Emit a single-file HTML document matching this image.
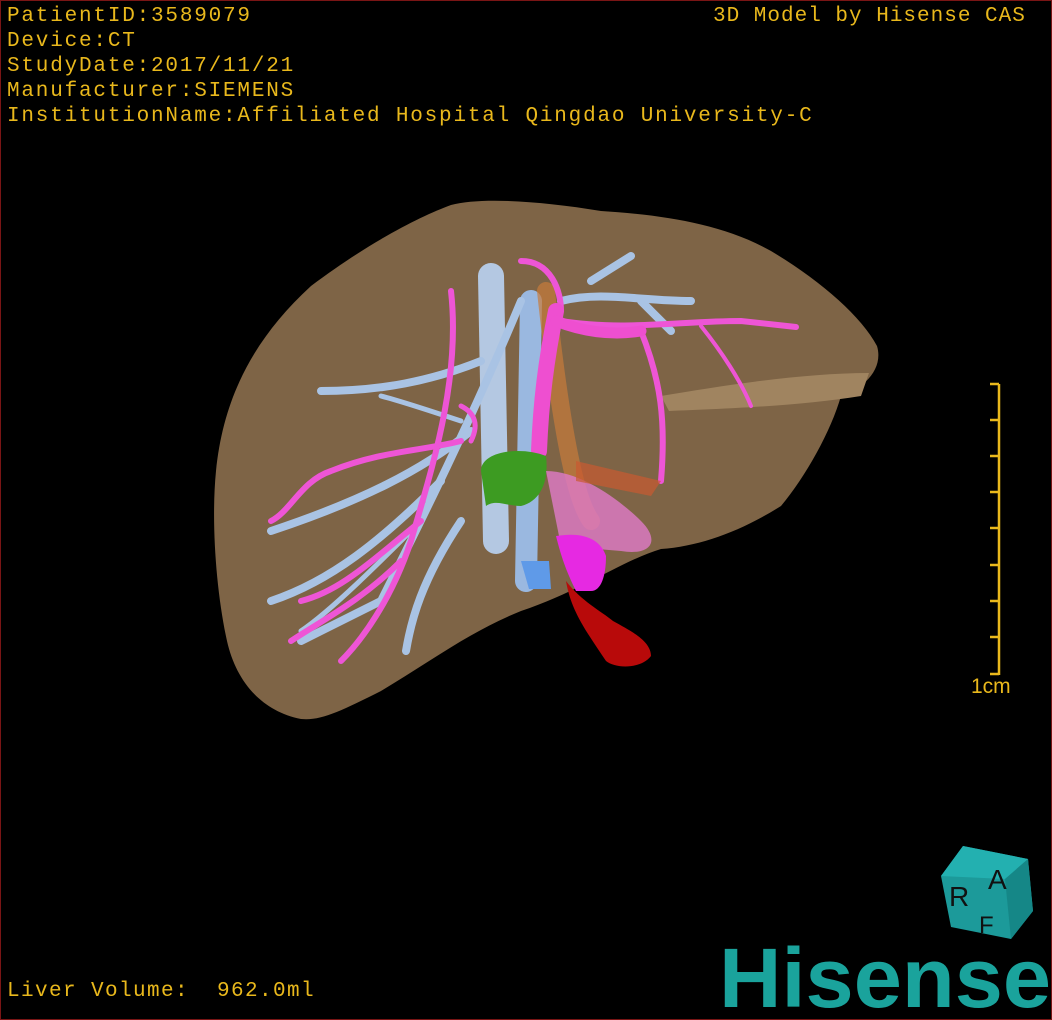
<!DOCTYPE html>
<html><head><meta charset="utf-8"><style>
html,body{margin:0;padding:0;background:#000;}
.wrap{position:relative;width:1050px;height:1018px;border:1px solid #7a1515;overflow:hidden;background:#000;}
.t{position:absolute;font-family:"Liberation Mono",monospace;color:#e9b81c;font-size:21px;letter-spacing:1.8px;white-space:pre;line-height:25px;}
</style></head><body><div class="wrap">
<svg width="1050" height="1018" style="position:absolute;left:0;top:0">
<path d="M215,470 C222,400 250,340 310,285 C370,240 420,215 450,204 C480,196 540,200 600,210 C660,214 720,222 770,250 C820,280 860,315 876,345 C882,365 868,385 840,395 C830,430 805,475 780,505 C740,530 700,545 660,548 C620,560 580,590 520,610 C470,630 430,660 380,690 C340,710 320,720 300,718 C260,710 235,680 226,640 C215,590 210,520 215,470 Z" fill="#7e6446"/>
<path d="M660,395 C720,385 800,372 868,372 L860,395 C800,405 720,408 668,410 Z" fill="#a08460"/>
<g fill="none" stroke-linecap="round">
<path d="M490,275 L495,540" stroke="#b4c8e2" stroke-width="26"/>
<path d="M530,300 L525,580" stroke="#9ab8e0" stroke-width="22"/>
<path d="M545,290 C560,430 575,500 590,520" stroke="#c77a3a" stroke-width="18" opacity=".7"/>
<g stroke="#a9c3e4" stroke-width="8">
<path d="M520,300 C470,420 420,520 380,600 L300,640"/>
<path d="M470,430 C420,470 360,500 270,530"/>
<path d="M480,360 C430,380 380,390 320,390"/>
<path d="M460,520 C420,580 410,620 405,650"/>
<path d="M440,480 C380,540 330,580 270,600"/>
<path d="M560,300 C600,290 640,300 690,300"/>
<path d="M590,280 L630,255"/>
<path d="M640,300 L670,330"/>
<path d="M460,420 C430,410 400,400 380,395" stroke-width="5"/>
<path d="M420,520 C380,560 330,610 300,630" stroke-width="5"/>
</g>
<g stroke="#ee55d6" stroke-width="6">
<path d="M450,290 C460,380 430,470 410,540 C390,600 360,640 340,660"/>
<path d="M460,440 C420,450 380,450 330,470 C300,480 290,510 270,520"/>
<path d="M420,520 C370,560 340,590 300,600"/>
<path d="M560,320 C620,330 680,320 740,320 L795,326"/>
<path d="M640,330 C660,380 665,420 660,480"/>
<path d="M520,260 C550,260 560,290 560,310"/>
<path d="M400,560 C360,600 320,620 290,640"/>
<path d="M700,325 C720,350 740,380 750,405" stroke-width="4"/>
<path d="M470,440 C480,420 470,410 460,405" stroke-width="5"/>
</g>
<path d="M555,310 C545,360 540,400 538,450" stroke="#ee4fd0" stroke-width="16"/>
<path d="M555,320 C580,330 610,335 640,330" stroke="#ee4fd0" stroke-width="11"/>
</g>
<path d="M480,470 C480,450 520,445 545,455 C548,480 540,500 520,505 C505,505 495,498 485,505 Z" fill="#3d9b22"/>
<path d="M545,470 C580,470 620,500 640,520 C660,540 650,555 620,550 L560,545 Z" fill="#e07ac8" opacity=".8"/>
<path d="M555,535 C585,530 600,540 605,555 C605,575 600,590 590,590 L575,590 C565,570 560,555 555,535 Z" fill="#e629e2"/>
<path d="M565,580 C580,600 600,610 612,620 C630,630 650,640 650,655 C640,668 615,668 605,660 C585,630 570,610 565,580 Z" fill="#b80a0a"/>
<path d="M520,560 L548,560 L550,588 L528,588 Z" fill="#5f9ae8"/>
<path d="M575,460 L660,480 L650,495 L575,480 Z" fill="#c95a30" opacity=".7"/>
<g stroke="#e9b81c" stroke-width="2.5">
<line x1="998" y1="383" x2="998" y2="674"/>
<line x1="989" y1="383" x2="998" y2="383"/><line x1="989" y1="419" x2="998" y2="419"/>
<line x1="989" y1="455" x2="998" y2="455"/><line x1="989" y1="491" x2="998" y2="491"/>
<line x1="989" y1="527" x2="998" y2="527"/><line x1="989" y1="564" x2="998" y2="564"/>
<line x1="989" y1="600" x2="998" y2="600"/><line x1="989" y1="636" x2="998" y2="636"/>
<line x1="989" y1="673" x2="998" y2="673"/>
</g>
<polygon points="962,845 1027,858 1032,910 1010,938 950,926 940,875" fill="#1c9a9a"/>
<polygon points="962,845 1027,858 1004,878 940,875" fill="#23b0b0"/>
<polygon points="1004,878 1027,858 1032,910 1010,938" fill="#158787"/>
<text x="948" y="905" font-family="Liberation Sans,sans-serif" font-size="28" fill="#111">R</text>
<text x="987" y="888" font-family="Liberation Sans,sans-serif" font-size="28" fill="#111">A</text>
<text x="978" y="932" font-family="Liberation Sans,sans-serif" font-size="24" fill="#111">F</text>
<text x="718" y="1006" font-family="Liberation Sans,sans-serif" font-weight="bold" font-size="84" fill="#1aa39c" textLength="332" lengthAdjust="spacingAndGlyphs">Hisense</text>
</svg>
<div class="t" style="left:6px;top:3px">PatientID:3589079
Device:CT
StudyDate:2017/11/21
Manufacturer:SIEMENS
InstitutionName:Affiliated Hospital Qingdao University-C</div>
<div class="t" style="left:712px;top:3px;letter-spacing:1px">3D Model by Hisense CAS</div>
<div class="t" style="left:970px;top:673px;font-family:'Liberation Sans',sans-serif;letter-spacing:0">1cm</div>
<div class="t" style="left:6px;top:978px;letter-spacing:1.4px">Liver Volume:  962.0ml</div>
</div></body></html>
